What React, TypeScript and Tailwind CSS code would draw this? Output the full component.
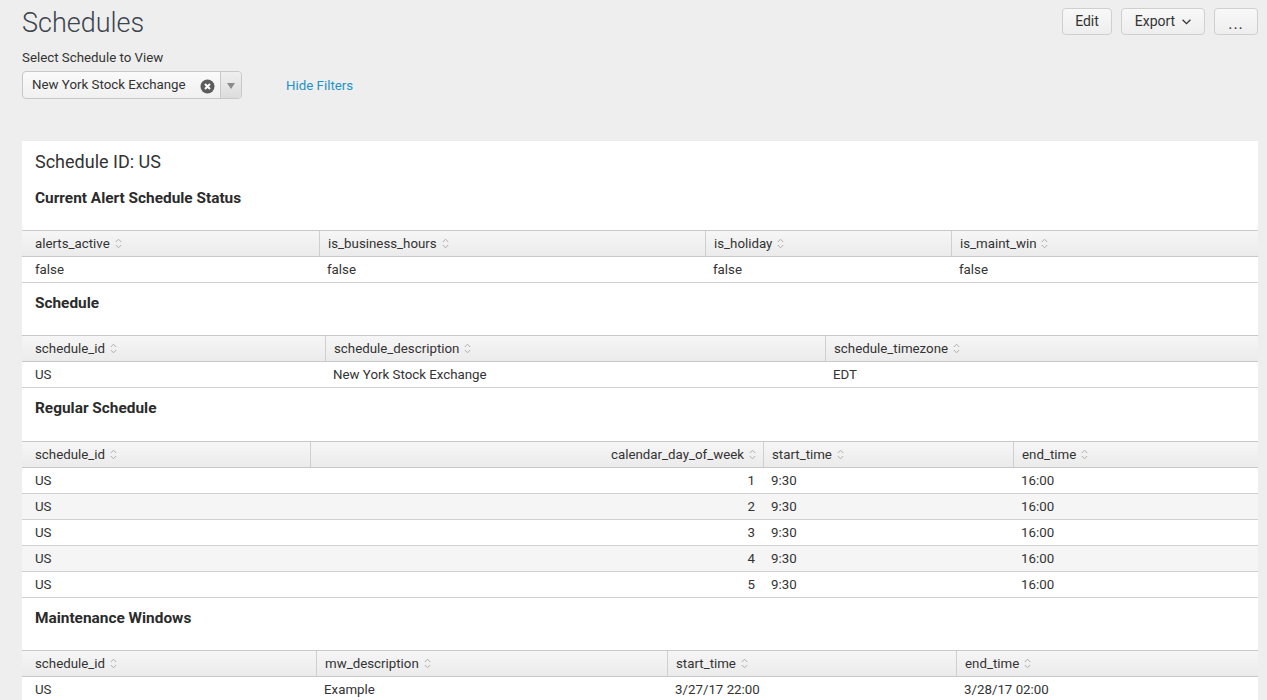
import React from "react";

function Sort() {
  return (
    <svg width="7" height="11" viewBox="0 0 7 11" fill="none" stroke="#aeaeae" strokeWidth="1" className="ml-[5px] shrink-0">
      <path d="M0.8 4 L3.5 1.2 L6.2 4" />
      <path d="M0.8 7 L3.5 9.8 L6.2 7" />
    </svg>
  );
}

type Col = { label: string; right?: boolean };

function Table({ gridClass, cols, rows }: { gridClass: string; cols: Col[]; rows: string[][] }) {
  return (
    <div>
      <div className={`grid ${gridClass} h-[27px] border-y border-[#c8c8c8] bg-gradient-to-b from-[#f6f6f6] to-[#ebebeb]`}>
        {cols.map((c, i) => (
          <div
            key={c.label + i}
            className={`flex items-center ${i === 0 ? "pl-[13px]" : "border-l border-[#cfcfcf] pl-2"} ${c.right ? "justify-end pr-[7px]" : ""}`}
          >
            <span>{c.label}</span>
            <Sort />
          </div>
        ))}
      </div>
      {rows.map((r, ri) => (
        <div
          key={ri}
          className={`grid ${gridClass} h-[26px] border-b border-[#d0d0d0] ${ri % 2 === 1 ? "bg-[#f5f5f5]" : "bg-white"}`}
        >
          {r.map((v, i) => (
            <div
              key={i}
              className={`flex items-center ${i === 0 ? "pl-[13px]" : "pl-2"} ${cols[i].right ? "justify-end pr-2" : ""}`}
            >
              {v}
            </div>
          ))}
        </div>
      ))}
    </div>
  );
}

function SectionTitle({ h53, children }: { h53?: boolean; children: React.ReactNode }) {
  return (
    <div className={`${h53 ? "h-[53px]" : "h-[52px]"} pl-[13px] pt-[9px] text-[15.4px] leading-[22px] font-bold text-[#2b2b2b]`}>
      {children}
    </div>
  );
}

const btn =
  "h-[27px] flex items-center justify-center rounded-[4px] border border-[#cfcfcf] bg-gradient-to-b from-[#f8f8f8] to-[#eeeeee] text-[14px] text-[#333]";

export default function App() {
  return (
    <div className="h-[700px] overflow-hidden bg-[#eeeeee] pl-[22px] pr-[9px] text-[13.3px] text-[#333] font-['Roboto',sans-serif]">
      <div className="flex justify-between h-[46px]">
        <h1 className="text-[27px] font-light leading-[46px] text-[#3c444d]">Schedules</h1>
        <div className="flex gap-[9px] pt-2">
          <button className={`${btn} w-[50px]`}>Edit</button>
          <button className={`${btn} w-[84px] gap-[7px]`}>
            Export
            <svg width="9" height="6" viewBox="0 0 9 6" fill="none" stroke="#333" strokeWidth="1.3">
              <path d="M0.6 0.8 L4.5 4.7 L8.4 0.8" />
            </svg>
          </button>
          <button className={`${btn} w-[44px] items-end pb-[3px] leading-[14px] tracking-[1px] text-[16px]`}>...</button>
        </div>
      </div>
      <div className="h-[25px] leading-[24px]">Select Schedule to View</div>
      <div className="flex items-center h-[28px]">
        <div className="flex w-[220px] h-[28px] rounded-[4px] border border-[#c8c8c8] bg-gradient-to-b from-[#fafafa] to-[#f0f0f0]">
          <div className="flex-1 flex items-center pl-[9px] pr-[5px] justify-between">
            <span>New York Stock Exchange</span>
            <svg width="15" height="15" viewBox="0 0 15 15" className="mt-[2px]">
              <circle cx="7.5" cy="7.5" r="7" fill="#5c5c5c" />
              <path d="M5 5 L10 10 M10 5 L5 10" stroke="#fff" strokeWidth="2" />
            </svg>
          </div>
          <div className="w-[21px] border-l border-[#c8c8c8] flex items-center justify-center bg-gradient-to-b from-[#efefef] to-[#dcdcdc] rounded-r-[4px]">
            <svg width="8" height="6" viewBox="0 0 8 6" className="mt-[2px] mr-[1px]">
              <path d="M0 0 H8 L4 6 Z" fill="#8a8a8a" />
            </svg>
          </div>
        </div>
        <a className="ml-[44px] text-[#1e93c6] mt-[1px]">Hide Filters</a>
      </div>
      <div className="mt-[42px] bg-white">
        <div className="h-[89px] pl-[13px]">
          <div className="pt-[9px] text-[18px] leading-[24px] text-[#333]">Schedule ID: US</div>
          <div className="mt-[13px] text-[15.4px] leading-[22px] font-bold text-[#2b2b2b]">Current Alert Schedule Status</div>
        </div>
        <Table
          gridClass="grid-cols-[297px_386px_246px_1fr]"
          cols={[{ label: "alerts_active" }, { label: "is_business_hours" }, { label: "is_holiday" }, { label: "is_maint_win" }]}
          rows={[["false", "false", "false", "false"]]}
        />
        <SectionTitle>Schedule</SectionTitle>
        <Table
          gridClass="grid-cols-[303px_500px_1fr]"
          cols={[{ label: "schedule_id" }, { label: "schedule_description" }, { label: "schedule_timezone" }]}
          rows={[["US", "New York Stock Exchange", "EDT"]]}
        />
        <SectionTitle h53>Regular Schedule</SectionTitle>
        <Table
          gridClass="grid-cols-[288px_453px_250px_1fr]"
          cols={[{ label: "schedule_id" }, { label: "calendar_day_of_week", right: true }, { label: "start_time" }, { label: "end_time" }]}
          rows={[
            ["US", "1", "9:30", "16:00"],
            ["US", "2", "9:30", "16:00"],
            ["US", "3", "9:30", "16:00"],
            ["US", "4", "9:30", "16:00"],
            ["US", "5", "9:30", "16:00"],
          ]}
        />
        <SectionTitle>Maintenance Windows</SectionTitle>
        <Table
          gridClass="grid-cols-[294px_351px_289px_1fr]"
          cols={[{ label: "schedule_id" }, { label: "mw_description" }, { label: "start_time" }, { label: "end_time" }]}
          rows={[["US", "Example", "3/27/17 22:00", "3/28/17 02:00"]]}
        />
      </div>
    </div>
  );
}
